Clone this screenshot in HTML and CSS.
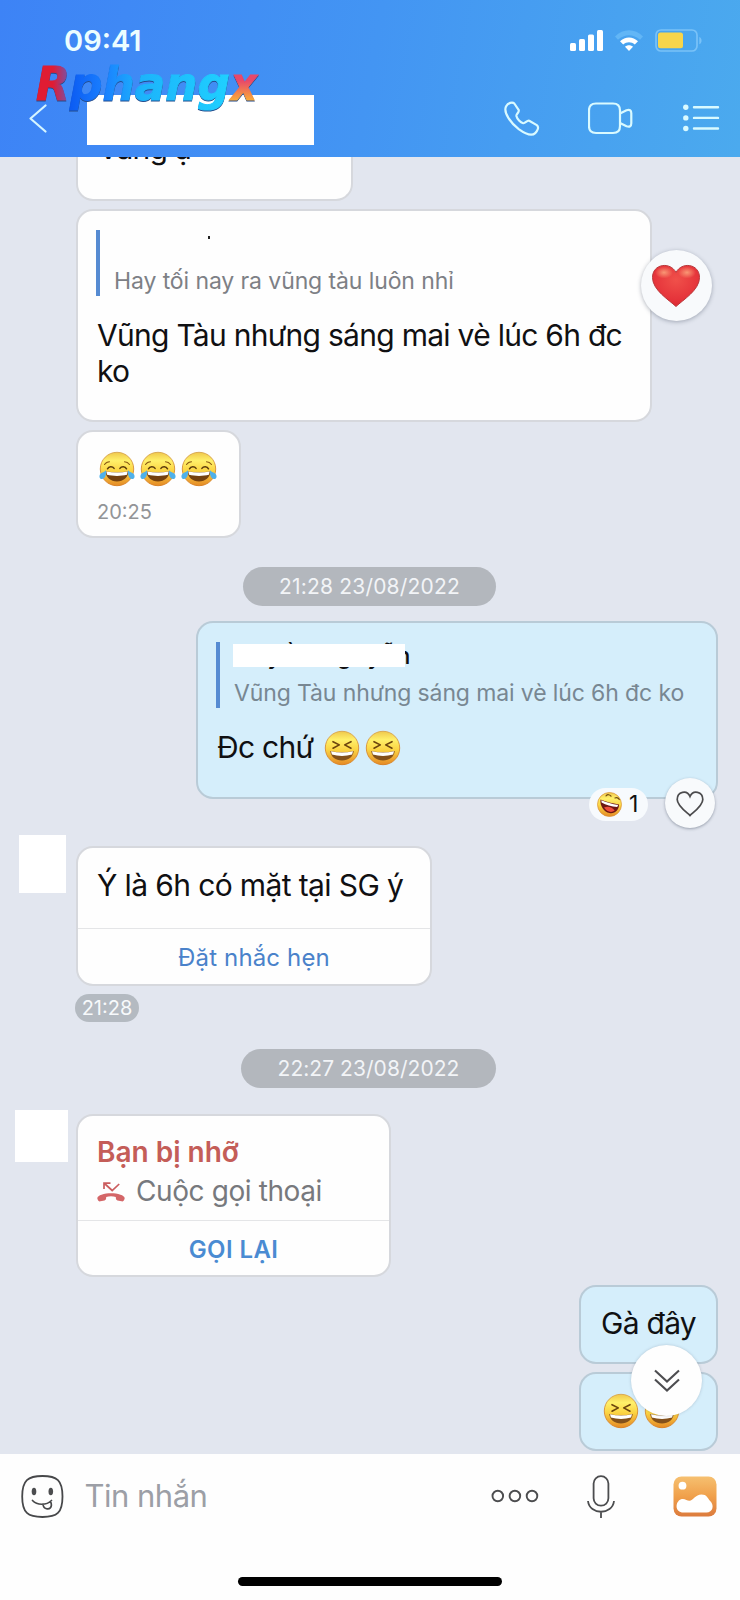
FILE: index.html
```html
<!DOCTYPE html>
<html lang="vi">
<head>
<meta charset="utf-8">
<title>Tin nhắn</title>
<link rel="stylesheet" href="styles.css">
</head>
<body>
<svg class="defs" width="0" height="0" aria-hidden="true">
  <defs>
    <linearGradient id="face" x1="0" y1="0" x2="0" y2="1"><stop offset="0" stop-color="#efc84c"/><stop offset=".25" stop-color="#fff06a"/><stop offset=".55" stop-color="#fbd443"/><stop offset="1" stop-color="#e58a25"/></linearGradient>
    <linearGradient id="rim" x1="0" y1="0" x2="0" y2="1"><stop offset="0" stop-color="#d9aa55"/><stop offset="1" stop-color="#d98328"/></linearGradient>
    <radialGradient id="heartfill" cx=".5" cy=".35" r=".7"><stop offset="0" stop-color="#f0504a"/><stop offset=".7" stop-color="#e5333a"/><stop offset="1" stop-color="#d8242f"/></radialGradient>
    <radialGradient id="shine"><stop offset="0" stop-color="#ffb586" stop-opacity=".75"/><stop offset="1" stop-color="#ffb586" stop-opacity="0"/></radialGradient>
    <linearGradient id="photo" x1="0" y1="0" x2="0" y2="1"><stop offset="0" stop-color="#f6c070"/><stop offset=".5" stop-color="#f0a04b"/><stop offset="1" stop-color="#dc7b3d"/></linearGradient>
    <linearGradient id="logoR" x1="0" x2="1" y1="0" y2="0"><stop offset=".5" stop-color="#e01c33"/><stop offset="1" stop-color="#6a58b8"/></linearGradient>
    <linearGradient id="logoP" x1="0" x2="1" y1="0" y2="0"><stop offset="0" stop-color="#0b5af2"/><stop offset=".22" stop-color="#1a80ff"/><stop offset=".45" stop-color="#1cb4fb"/><stop offset="1" stop-color="#1fd0ff"/></linearGradient>
    <linearGradient id="logoX" x1="0" x2="0" y1="0" y2="1"><stop offset=".45" stop-color="#e8486a"/><stop offset=".8" stop-color="#f9a93a"/></linearGradient>
    <symbol id="joy" viewBox="0 0 36 36">
      <circle cx="18" cy="18" r="16.7" fill="url(#face)" stroke="url(#rim)" stroke-width="1"/>
      <path d="M5.500 13.500c1.200-1.800 3-2.800 5-2.800M30.500 13.500c-1.200-1.800-3-2.800-5-2.800" fill="none" stroke="#8a5a14" stroke-width="1.100" stroke-linecap="round"/>
      <path d="M8.500 17.800c1.300-2.600 5-2.600 6.600-.4M20.900 17.400c1.600-2.200 5.300-2.200 6.600.4" fill="none" stroke="#5b3a0c" stroke-width="1.500" stroke-linecap="round"/>
      <path d="M6.500 20.300c7 1.500 16 1.500 23 0-.5 6.200-5 10.200-11.500 10.200S7 26.500 6.500 20.300z" fill="#74410f"/>
      <path d="M7.300 20.500c7 1.400 14.800 1.400 21.400 0l-.7 3.300c-6 1.500-14 1.500-20 0z" fill="#fff"/>
      <path d="M6.800 19.200c.9 3.800-.6 8.500-3.700 8.800-2.800.2-3.500-3.200-1.600-5.200 1.200-1.300 4.100-1.500 5.300-3.600zM29.200 19.200c-.9 3.800.6 8.500 3.700 8.800 2.800.2 3.500-3.200 1.600-5.200-1.200-1.300-4.100-1.500-5.300-3.600z" fill="#4fb0ea"/>
    </symbol>
    <symbol id="laugh" viewBox="0 0 36 36">
      <circle cx="18" cy="18" r="16.700" fill="url(#face)" stroke="url(#rim)" stroke-width="1"/>
      <path d="M9 11.700l6.300 3.200-6.300 3.300M27 11.700l-6.300 3.200 6.300 3.300" fill="none" stroke="#6b430d" stroke-width="1.600" stroke-linecap="round" stroke-linejoin="round"/>
      <path d="M6.200 21c7.500 1.800 16.100 1.800 23.600 0-.9 6-5.300 9.500-11.800 9.500S7.100 27 6.200 21z" fill="#83501a"/>
      <path d="M7 21.300c7 1.600 15 1.600 22 0l-.9 3.300c-6.400 1.800-13.800 1.800-20.200 0z" fill="#fff"/>
    </symbol>
  </defs>
</svg>
<div class="screen">
  <header class="header">
    <div class="status">
      <span class="clock">09:41</span>
      <svg class="signal" width="34" height="22" viewBox="0 0 34 22" fill="#fff"><rect x="0" y="13" width="6" height="8" rx="1.500"/><rect x="9" y="9" width="6" height="12" rx="1.500"/><rect x="18" y="4.500" width="6" height="16.500" rx="1.500"/><rect x="27" y="0" width="6" height="21" rx="1.500"/></svg>
      <svg class="wifi" width="28" height="22" viewBox="0 0 28 22"><path d="M0 6.500C8-1.800 20-1.800 28 6.500l-3 3.200c-6.400-6-15.600-6-22 0z" fill="#62b6f6"/><path d="M5 11.300c5-5.200 13-5.200 18 0l-3.200 3.300c-3.400-3.100-8.200-3.100-11.600 0z" fill="#fff"/><path d="M10 16.800c2.300-2 5.700-2 8 0l-4 4.200z" fill="#fff"/></svg>
      <svg class="battery" width="48" height="23" viewBox="0 0 48 23"><rect x="1" y="1" width="41" height="21" rx="5" fill="none" stroke="#79c2f8" stroke-width="1.700"/><rect x="3" y="3.500" width="25" height="15.800" rx="2.500" fill="#f7d54b"/><path d="M44.300 8c3 1 3 6.200 0 7.200z" fill="#79c2f8"/></svg>
    </div>
    <nav class="nav">
      <svg class="back" width="18" height="29" viewBox="0 0 18 29"><path d="M16.500 1.500L1.500 14.500l15 13" fill="none" stroke="#d5f5ff" stroke-width="2.200" stroke-linecap="round" stroke-linejoin="round"/></svg>
      <div class="peer"></div>
      <svg class="call" width="36" height="35" viewBox="0 0 36 35"><path d="M2 5.500C4 1.700 8.500.6 10.300 2.500l4.300 6.400c1.200 2.200-2.600 4-2.200 6.100.7 3 4 6.500 6.800 7.200 2.100.5 3.800-3.200 6-2.400l7.600 4.300c2.600 2 .7 5.700-1.600 8-3.100 3-9.800.8-16.500-4C7.500 22.600-1 12 2 5.500z" fill="none" stroke="#d9faff" stroke-width="2.200" stroke-linejoin="round"/></svg>
      <svg class="video" width="45" height="33" viewBox="0 0 45 33" fill="none" stroke="#d9faff" stroke-width="2.200" stroke-linejoin="round"><path d="M8 1.500h17q7 0 7 7v15.500q0 7-7 7H8q-7 0-7-7v-15.500q0-7 7-7z"/><path d="M32 11.500l6.500-3.300q4.800-1.500 4.800 3v10q0 4.500-4.800 3L32 21"/></svg>
      <svg class="list" width="37" height="28" viewBox="0 0 37 28"><g fill="#d9faff"><circle cx="2.800" cy="3.300" r="2.700"/><circle cx="2.800" cy="13.900" r="2.700"/><circle cx="2.800" cy="24.500" r="2.700"/></g><path d="M11 3.300h24M11 13.900h24M11 24.500h24" stroke="#d9faff" stroke-width="2.400" stroke-linecap="round"/></svg>
    </nav>
    <svg class="logo" width="228" height="56" viewBox="0 0 228 56">
      <g class="logo-text">
        <text x="1" y="40" fill="url(#logoR)" stroke="url(#logoR)" textLength="34" lengthAdjust="spacingAndGlyphs">R</text>
        <text x="35" y="40" fill="url(#logoP)" stroke="url(#logoP)" textLength="160" lengthAdjust="spacingAndGlyphs">phang</text>
        <text x="196" y="40" fill="url(#logoX)" stroke="url(#logoX)" textLength="26" lengthAdjust="spacingAndGlyphs">x</text>
      </g>
    </svg>
  </header>

  <main class="chat">
    <div class="bubble in b-top"><p class="msg">Vâng ạ</p></div>

    <div class="bubble in b-quote">
      <div class="quote"><span class="speck"></span><p class="quote-text">Hay tối nay ra vũng tàu luôn nhỉ</p></div>
      <p class="msg">Vũng Tàu nhưng sáng mai vè lúc 6h đc<br>ko</p>
      <div class="love"><svg width="50" height="44" viewBox="0 0 50 44"><path d="M25 42.500C18 36 1.500 26 1.500 13.500 1.500-.5 19.500-2.500 25 8.500 30.500-2.500 48.500-.5 48.500 13.500 48.500 26 32 36 25 42.500z" fill="url(#heartfill)" stroke="#b83a3c" stroke-width="1"/><ellipse cx="13" cy="8.500" rx="9" ry="6" fill="url(#shine)"/><ellipse cx="36" cy="8.500" rx="9" ry="6" fill="url(#shine)"/></svg></div>
    </div>

    <div class="bubble in b-joy">
      <div class="emojis"><svg class="emoji"><use href="#joy"/></svg><svg class="emoji"><use href="#joy"/></svg><svg class="emoji"><use href="#joy"/></svg></div>
      <time class="sent">20:25</time>
    </div>

    <time class="date d1">21:28 23/08/2022</time>

    <div class="bubble out b-reply">
      <div class="quote"><p class="quote-name">Huyền Nguyễn</p><span class="mask"></span><p class="quote-text">Vũng Tàu nhưng sáng mai vè lúc 6h đc ko</p></div>
      <div class="msg-line"><p class="msg">Đc chứ</p><svg class="emoji"><use href="#laugh"/></svg><svg class="emoji"><use href="#laugh"/></svg></div>
      <div class="reaction"><svg width="25" height="25" viewBox="0 0 25 25"><circle cx="12.500" cy="12.500" r="12" fill="url(#face)" stroke="#d98f35" stroke-width=".7"/><path d="M9 3.800c1.500-1.500 3.500-1.500 5 .4M18 6c1.800-.7 3.300-.2 4.300 1.500" fill="none" stroke="#71490f" stroke-width="1.200" stroke-linecap="round"/><path d="M3.500 7.500c5 2 12 4 18.500 5 0 6-4.500 9.500-9.500 8.500C7 20 2.700 14 3.500 7.500z" fill="#6e1714"/><path d="M4.300 8.300c5 2 11 3.800 16.900 4.800l-1 2C14.500 14.500 9 13 4.600 10.600z" fill="#fff"/><path d="M7 15.500c3.500-1.700 8.500-.5 10.700 3-3 2.700-8.200 1.300-10.700-3z" fill="#ee4d3c"/></svg><span>1</span></div>
      <div class="like"><svg width="28" height="26" viewBox="0 0 28 26"><path d="M14 24.500C9 20 1.200 14.500 1.200 8.500 1.200.5 11-1.500 14 5.500 17-1.500 26.800.5 26.800 8.500 26.800 14.500 19 20 14 24.500z" fill="none" stroke="#4b4b4d" stroke-width="1.700"/></svg></div>
    </div>

    <div class="row r-remind">
      <div class="avatar"></div>
      <div class="bubble in b-remind"><p class="msg">Ý là 6h có mặt tại SG ý</p><div class="action remind"><span>Đặt nhắc hẹn</span></div></div>
    </div>

    <time class="stamp">21:28</time>
    <time class="date d2">22:27 23/08/2022</time>

    <div class="row r-call">
      <div class="avatar"></div>
      <div class="bubble in b-call">
        <p class="missed"><span>Bạn bị nhỡ</span></p>
        <div class="kind"><svg width="28" height="20" viewBox="0 0 28 20"><path d="M7 7V1.200h6.500M7.500 1.500l7.700 7 7-6.500" fill="none" stroke="#cb5d5f" stroke-width="1.700"/><path d="M.5 17c-.8-2 1.500-3.500 4-4.300 6-1.900 13-1.900 19 0 2.500.8 4.800 2.300 4 4.300-.5 1.800-1.500 2.700-3 2.300l-4-.8c-2-.5-1.500-2-1.700-3.400-3-1-6.600-1-9.600 0-.2 1.400.3 2.900-1.700 3.400l-4 .8c-1.500.4-2.500-.5-3-2.300z" fill="#d46668"/></svg><span>Cuộc gọi thoại</span></div>
        <div class="action back-call"><span>GỌI LẠI</span></div>
      </div>
    </div>

    <div class="bubble out b-ga"><p class="msg">Gà đây</p></div>
    <div class="bubble out b-last">
      <div class="emojis"><svg class="emoji"><use href="#laugh"/></svg><svg class="emoji"><use href="#laugh"/></svg></div>
      <div class="jump"><svg width="26" height="24" viewBox="0 0 26 24"><path d="M1 1.500l12 11 12-11M1 10.500l12 11 12-11" fill="none" stroke="#4d4d50" stroke-width="2.100"/></svg></div>
    </div>
  </main>

  <footer class="composer">
    <div class="bar">
      <svg class="sticker" width="43" height="43" viewBox="0 0 43 43"><path d="M21.500 1C36 1 41.500 5 41.500 21.500S36 42 21.500 42 1.200 38 1.200 21.500 7 1 21.500 1z" fill="none" stroke="#47484a" stroke-width="1.800"/><ellipse cx="13" cy="16.500" rx="2.300" ry="3.800" fill="#4c4d4f"/><ellipse cx="29.800" cy="16.500" rx="2.300" ry="3.800" fill="#4c4d4f"/><path d="M11.500 25.500c4.500 5 14 5 19 0M22 29c.3 6 7.800 6.500 8.400 1.200.1-1.500-.4-2.700-1.200-3.500" fill="none" stroke="#47484a" stroke-width="1.700" stroke-linecap="round"/></svg>
      <span class="placeholder">Tin nhắn</span>
      <svg class="more" width="48" height="14" viewBox="0 0 48 14" fill="none" stroke="#4c4d4f" stroke-width="1.900"><circle cx="6.800" cy="7" r="5.300"/><circle cx="23.900" cy="7" r="5.300"/><circle cx="41" cy="7" r="5.300"/></svg>
      <svg class="mic" width="28" height="43" viewBox="0 0 28 43" fill="none" stroke="#4c4d4f" stroke-width="1.800"><rect x="6.600" y="1.200" width="14.800" height="29.500" rx="7.400"/><path d="M1 26c1.500 14.300 24.500 14.300 26 0M14 37v6"/></svg>
      <svg class="photo" width="44" height="41" viewBox="0 0 44 41"><rect x=".5" y=".5" width="43" height="40" rx="8" fill="url(#photo)"/><circle cx="9.500" cy="9.700" r="3.900" fill="#fff"/><path d="M10.500 36.500c-9 0-8.300-10.500-3-13 4-1.700 6.500 1.500 9 1.300 3.500-.3 6-6.300 12-6.300 5.500 0 6 3.700 8.700 6.500 4.500 4.500 2.500 11.500-3.700 11.500z" fill="#fff"/></svg>
    </div>
    <div class="home"></div>
  </footer>
</div>
</body>
</html>
```
FILE: styles.css
```css
* { box-sizing: border-box; }
body { margin: 0; font-family: "Inter", "Noto Sans", sans-serif; color: #101012; }
p { margin: 0; }
svg { display: block; flex: none; }
.defs { position: absolute; }
.screen { width: 740px; height: 1600px; display: flex; flex-direction: column; overflow: hidden; background: #e2e6ef; }

/* Header */
.header { position: relative; z-index: 1; flex: none; height: 157px; background: linear-gradient(100deg, #3d83f6 0%, #4395f3 50%, #4baaee 100%); }
.status { display: flex; align-items: center; height: 81px; padding-left: 64px; }
.clock { flex: 1; color: #ecfdff; font-size: 29px; font-weight: 600; line-height: 36px; }
.wifi { margin-left: 11px; }
.battery { margin: 0 37px 0 12px; }
.nav { display: flex; align-items: center; height: 74px; }
.back { margin-left: 28.500px; }
.peer { width: 227px; height: 50px; margin: 4px 0 0 40.500px; background: #fff; }
.call { margin-left: 190px; }
.video { margin-left: 48px; }
.list { margin-left: 50px; }
.logo { position: absolute; left: 35px; top: 60px; overflow: visible; }
.logo-text { font-family: "DejaVu Sans", sans-serif; font-weight: 700; font-style: italic; font-size: 47px; stroke-width: 1px; filter: drop-shadow(0 1.500px 0 #244c8c); }

/* Messages */
.chat { display: flex; flex-direction: column; align-items: flex-start; flex: none; height: 1297px; }
.bubble { position: relative; flex: none; border: 2px solid #d6d8dd; border-radius: 17px; background: #fefefe; }
.in { margin-left: 76px; }
.out { align-self: flex-end; margin-right: 22px; background: #d5eefb; border-color: #b9cbd7; }
.msg { font-size: 30px; line-height: 35.500px; letter-spacing: -.72px; white-space: nowrap; }
.emojis { display: flex; gap: 5px; }
.emoji { width: 36px; height: 36px; }

.b-top { width: 277px; height: 44px; border-top: 0; border-radius: 0 0 17px 17px; padding-left: 20px; }
.b-top .msg { margin-top: -26px; }
.b-quote { width: 576px; height: 213px; margin-top: 8px; padding: 19px 18px; }
.quote { position: relative; display: flex; flex-direction: column; justify-content: flex-end; height: 66px; padding: 0 0 1px 14px; border-left: 4px solid #568bd2; }
.quote-text { color: #7d8085; font-size: 23px; line-height: 28px; letter-spacing: -.1px; white-space: nowrap; }
.out .quote-text { color: #788792; letter-spacing: -.12px; }
.speck { position: absolute; left: 108px; top: 6px; width: 2px; height: 3px; background: #222; }
.b-quote .msg { margin: 22px 0 0 1px; }
.love { position: absolute; right: -61.500px; top: 38.500px; display: grid; place-items: center; width: 71px; height: 71px; padding-top: 1px; border-radius: 50%; background: #f8fafc; box-shadow: 0 1px 4px rgba(60, 70, 90, .4); }

.b-joy { width: 165px; height: 108px; margin-top: 8px; padding: 19px 20px; }
.b-joy .emojis { padding-left: .5px; gap: 5.200px; }
.sent { display: block; margin: 13px 0 0 -1px; color: #929497; font-size: 20px; line-height: 24px; }
.date { flex: none; height: 39px; border-radius: 20px; background: #b3b7bd; color: #f2f4f7; font-size: 21px; line-height: 39px; text-align: center; letter-spacing: .2px; }
.d1 { width: 253px; margin: 29px 0 0 243px; }
.d2 { width: 255px; margin: 27px 0 0 241px; letter-spacing: .05px; }

.b-reply { width: 522px; height: 178px; margin-top: 15px; padding: 19px 18px; }
.quote-name { position: absolute; left: 14px; top: 0; font-size: 23.500px; font-weight: 500; line-height: 28px; letter-spacing: .9px; white-space: nowrap; }
.mask { position: absolute; left: 13px; top: 2px; width: 172px; height: 23px; background: #fff; }
.msg-line { display: flex; align-items: center; gap: 5px; margin: 22px 0 0 1px; }
.msg-line .msg { width: 101px; margin-right: 1px; }
.reaction { position: absolute; right: 68px; bottom: -24px; display: flex; align-items: center; gap: 7px; width: 59px; height: 33px; padding-left: 8px; border-radius: 17px; background: #f7fafd; font-size: 23px; line-height: 33px; }
.like { position: absolute; right: 1px; bottom: -31px; display: grid; place-items: center; width: 50px; height: 50px; padding-top: 2px; border-radius: 50%; background: #f8fafc; box-shadow: 0 1px 3px rgba(60, 70, 90, .45); }

.row { display: flex; align-items: flex-start; flex: none; }
.avatar { background: #fff; }
.r-remind { margin-top: 47px; }
.r-remind .avatar { width: 47px; height: 58px; margin: -11px 0 0 19px; }
.b-remind { width: 356px; height: 140px; margin-left: 10px; padding-top: 19.500px; }
.b-remind .msg { height: 60.500px; padding-left: 19px; letter-spacing: -.62px; }
.action { display: flex; align-items: center; justify-content: center; height: 56px; border-top: 1px solid #e4e5e7; color: #4a82ca; font-size: 24px; letter-spacing: .15px; }
.remind { padding-top: 1px; }
.stamp { flex: none; width: 64px; height: 28px; margin: 8px 0 0 75px; border-radius: 14px; background: #b4bac1; color: #f7f9fb; font-size: 20px; line-height: 28px; text-align: center; }

.r-call { margin-top: 26px; }
.r-call .avatar { width: 53px; height: 52px; margin: -4px 0 0 15px; }
.b-call { width: 315px; height: 163px; margin-left: 8px; padding-top: 17px; }
.missed { padding-left: 19px; color: #c45d58; font-size: 28px; font-weight: 600; line-height: 39px; }
.kind { display: flex; align-items: center; gap: 11px; height: 48px; padding: 0 0 9px 19px; color: #77797d; font-size: 28px; line-height: 39px; letter-spacing: -.4px; white-space: nowrap; }
.back-call { padding-top: 1px; font-weight: 600; color: #4a8bd2; letter-spacing: .4px; }

.b-ga { width: 139px; height: 79px; margin-top: 8px; padding: 19px 0 0 20px; }
.b-last { width: 139px; height: 79px; margin-top: 8px; padding: 19px 22px; }
.jump { position: absolute; right: 14px; top: -29px; display: grid; place-items: center; width: 71px; height: 71px; border-radius: 50%; background: #fefefe; box-shadow: 0 0 3px rgba(60, 70, 90, .25); }

/* Composer */
.composer { flex: none; height: 146px; background: #fefefe; }
.bar { display: flex; align-items: center; height: 84px; padding: 0 23px 0 21px; }
.placeholder { flex: 1; margin-left: 20.500px; color: #9c9fa6; font-size: 31px; line-height: 38px; letter-spacing: -.5px; }
.mic { margin-left: 48px; }
.photo { margin-left: 58px; }
.home { width: 264px; height: 9px; margin: 38.500px 0 0 238px; border-radius: 5px; background: #000; }
```
